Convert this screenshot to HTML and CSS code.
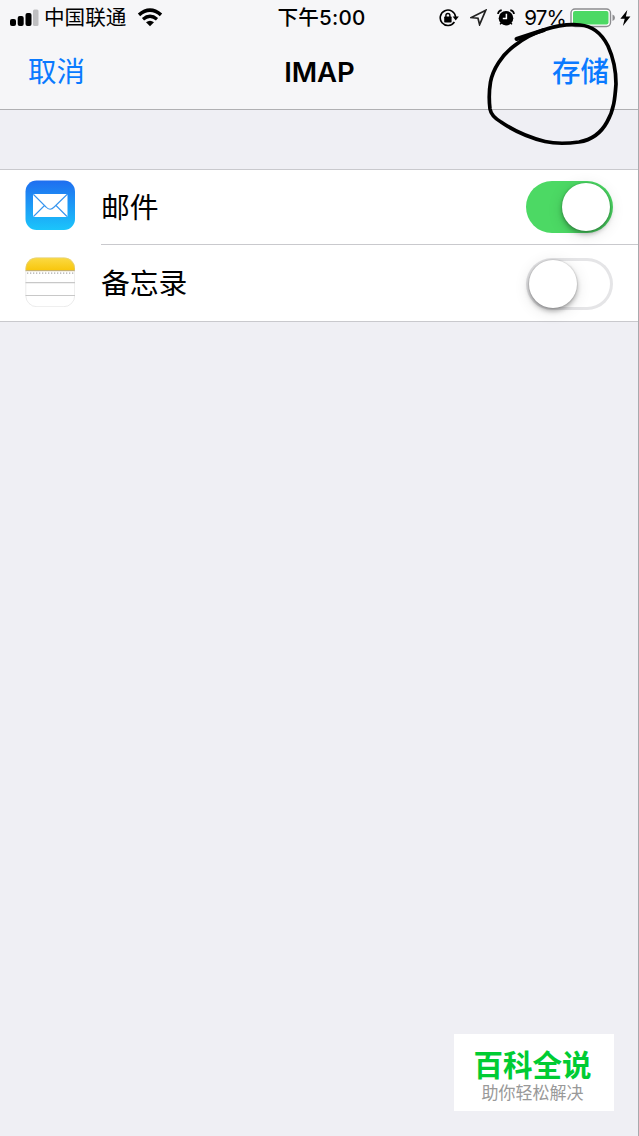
FILE: index.html
```html
<!DOCTYPE html>
<html lang="zh-CN">
    <head>
        <meta charset="utf-8">
        <title>IMAP</title>
        <link rel="stylesheet" href="styles.css">
    </head>
    <body>
        <div class="screen">
            <header>
                <div class="status">
                    <div class="left">
                        <svg class="signal" width="30" height="20" viewBox="0 0 30 20">
                            <rect x="0" y="11" width="6" height="7" rx="2"/>
                            <rect x="7.7" y="8" width="6" height="10" rx="2"/>
                            <rect x="15.5" y="5" width="6" height="13" rx="2"/>
                            <rect x="23" y="1.5" width="5.5" height="16.5" rx="1.5" fill="#bfbfc1"/>
                        </svg>
                        <span class="carrier">中国联通</span>
                        <svg class="wifi" width="26" height="19" viewBox="0 0 26 19">
                            <path d="M2 6.8Q13-2.6 24 6.8" fill="none" stroke="#000" stroke-width="3.6"/>
                            <path d="M6 11.2Q13 5.2 20 11.2" fill="none" stroke="#000" stroke-width="3.3"/>
                            <path d="M9 14.2Q13 11.2 17 14.2L13 18.2Z"/>
                        </svg>
                    </div>
                    <div class="time">下午5:00</div>
                    <div class="right">
                        <svg class="lock" width="20" height="18" viewBox="0 0 20 18">
                            <path d="M15.4 13A7.7 7.7 0 1 1 16.6 8" fill="none" stroke="#000" stroke-width="1.6"/>
                            <path d="M13.6 7.5H19.8L16.7 11.4Z"/>
                            <rect x="5.2" y="7.6" width="7.4" height="5.8" rx=".6"/>
                            <path d="M6.9 8.5V6.5a2 2 0 0 1 4 0V8.5" fill="none" stroke="#000" stroke-width="1.4"/>
                        </svg>
                        <svg class="arrow" width="17" height="17" viewBox="0 0 17 17">
                            <path d="M15.8 1.2L1.3 8.6L8 9.2L9.6 15.6Z" fill="none" stroke="#222" stroke-width="1.7"/>
                        </svg>
                        <svg class="alarm" width="18" height="18" viewBox="0 0 18 18">
                            <circle cx="9" cy="9.2" r="7.3"/>
                            <path d="M1 5Q1.4 1.8 4.7 1.2M17 5Q16.6 1.8 13.3 1.2" fill="none" stroke="#000" stroke-width="1.7"/>
                            <path d="M4 14L3.2 15.4M14 14L14.8 15.4" fill="none" stroke="#000" stroke-width="1.5"/>
                            <path d="M9.4 4.8V9.6H5.8" fill="none" stroke="#fff" stroke-width="1.5"/>
                        </svg>
                        <span class="percent">97%</span>
                        <svg class="battery" width="46" height="20" viewBox="0 0 46 20">
                            <rect x="1" y="1" width="39.5" height="17.5" rx="4" fill="#fff" stroke="#8c8c8f" stroke-width="1.4"/>
                            <rect x="3" y="3" width="35.5" height="13.5" rx="2" fill="#4cd964"/>
                            <path d="M42.5 6.5Q45 7.5 45 9.8T42.5 13Z" fill="#8c8c8f"/>
                        </svg>
                        <svg class="bolt" width="11" height="16" viewBox="0 0 11 16">
                            <path d="M7.3 0L.4 8.7H4.7L2.9 16L10.4 6.6H5.9Z"/>
                        </svg>
                    </div>
                </div>
                <div class="nav">
                    <a class="cancel">取消</a>
                    <h1>IMAP</h1>
                    <a class="save">存储</a>
                </div>
            </header>

            <ul class="list">
                <li>
                    <svg class="icon" width="50" height="50" viewBox="0 0 50 50">
                        <defs>
                            <linearGradient id="blue" x1="0" y1="0" x2="0" y2="1">
                                <stop offset="0" stop-color="#1f6ef0"/>
                                <stop offset="1" stop-color="#1bc5fb"/>
                            </linearGradient>
                        </defs>
                        <rect x=".5" y=".5" width="49.5" height="49.5" rx="11" fill="url(#blue)"/>
                        <rect x="8" y="14" width="34.5" height="23" rx="1.5" fill="#fff"/>
                        <path d="M8.5 14.5L21 27Q25 31.5 29.2 27L42 14.5M8.5 36.5L19.5 25.5M42 36.5L31 25.5" fill="none" stroke="#3795ef" stroke-width="1.1"/>
                    </svg>
                    <div class="cell">
                        <span>邮件</span>
                        <div class="switch on"><i></i></div>
                    </div>
                </li>
                <li>
                    <svg class="icon" width="50" height="50" viewBox="0 0 50 50">
                        <defs>
                            <clipPath id="round"><rect x=".5" y=".5" width="49.5" height="49.5" rx="11"/></clipPath>
                            <linearGradient id="yellow" x1="0" y1="0" x2="0" y2="1">
                                <stop offset="0" stop-color="#fbdb46"/>
                                <stop offset="1" stop-color="#f8c60c"/>
                            </linearGradient>
                        </defs>
                        <g clip-path="url(#round)">
                            <rect width="50" height="50" fill="#fff"/>
                            <rect width="50" height="13.5" fill="url(#yellow)"/>
                            <path d="M0 13.7H50" stroke="#b9a66a"/>
                            <path d="M2 16.2H50" stroke="#aaa" stroke-width="1.3" stroke-dasharray="1.3 1.7"/>
                            <path d="M0 25.6H50M0 38.5H50" stroke="#c8c8c8" stroke-width="1.2"/>
                        </g>
                        <rect x=".8" y=".8" width="48.9" height="48.9" rx="11" fill="none" stroke="#ccc" stroke-opacity=".5" stroke-width=".8"/>
                    </svg>
                    <div class="cell">
                        <span>备忘录</span>
                        <div class="switch"><i></i></div>
                    </div>
                </li>
            </ul>

            <div class="watermark">
                <strong>百科全说</strong>
                <small>助你轻松解决</small>
            </div>

            <!-- hand drawn ring round the save button -->
            <svg class="ring" width="140" height="130" viewBox="480 20 140 130">
                <path d="M545 29.5C557 25.5 568 24 580 25C594 26 602 34 608 46C613 57 616 69 616 84C615 98 614 110 607 122C601 133 591 140 579 142C568 143.5 556 144 545 141.5C531 138 514 131 501 122C495 118.5 491 115 490 109C489 101 489 91 490.5 82C493 69 502 55 514 46C524 38 534 33 545 29.5" stroke-width="3.7"/>
                <path d="M516.5 39L544 30" stroke-width="4"/>
            </svg>
        </div>
    </body>
</html>
```
FILE: styles.css
```css
*
{
    box-sizing: border-box;
}

body
{
    margin: 0;
    font-family: Inter, "Noto Sans CJK SC", sans-serif;
    color: #000;
}

svg
{
    display: block;
    flex-shrink: 0;
}

.screen
{
    position: relative;
    width: 639px;
    height: 1136px;
    background-color: #efeff4;
    border-right: 1px solid #a9a9ad;
    overflow: hidden;
}

header
{
    height: 110px;
    background-color: #f6f6f8;
    border-bottom: 1px solid #b0b0b3;
}

.status
{
    display: grid;
    grid-template-columns: 1fr auto 1fr;
    align-items: center;
    height: 35px;
    padding: 0 7px 0 10px;
    font-size: 20.6px;
    line-height: 35px;
}

.left, .right
{
    display: flex;
    align-items: center;
}

.right
{
    justify-content: flex-end;
}

.carrier
{
    margin: 0 11px 0 4px;
}

.time
{
    padding-left: 2px;
    font-weight: 500;
    letter-spacing: 0.2px;
}

.arrow
{
    margin-left: 11px;
}

.alarm
{
    margin: 0 9px 0 10px;
}

.percent
{
    letter-spacing: -0.8px;
}

.battery
{
    margin: 0 4px;
}

.nav
{
    display: grid;
    grid-template-columns: 1fr auto 1fr;
    align-items: center;
    height: 74px;
    padding: 0 29px 0 28px;
    font-size: 28.5px;
    line-height: 74px;
    color: #0a7aff;
}

.nav h1
{
    margin: 0;
    padding-left: 2px;
    font-size: 27.5px;
    font-weight: 600;
    color: #000;
}

.save
{
    text-align: right;
    font-weight: 500;
}

.list
{
    margin: 59px 0 0;
    padding: 0;
    list-style: none;
    background-color: #fff;
    border-top: 1px solid #c9c9cd;
    border-bottom: 1px solid #c9c9cd;
}

.list li
{
    display: flex;
    align-items: center;
    height: 75px;
    padding-left: 25px;
}

.list li:first-child
{
    height: 76px;
}

.icon
{
    margin-bottom: 3px;
}

.list li:first-child .icon
{
    margin-bottom: 6px;
}

.cell
{
    display: flex;
    align-items: center;
    justify-content: space-between;
    flex: 1;
    height: 75px;
    margin-left: 26px;
    padding-right: 25px;
    font-size: 28.8px;
}

.cell span
{
    padding-bottom: 4px;
}

.list li:first-child .cell
{
    border-bottom: 1px solid #c9c9cd;
    margin-bottom: 1px;
}

.switch
{
    width: 87px;
    height: 52px;
    padding: 2px 3px;
    border-radius: 26px;
    box-shadow: inset 0 0 0 3px #e5e5e7;
}

.switch i
{
    display: block;
    width: 48px;
    height: 48px;
    border-radius: 50%;
    background-color: #fff;
    box-shadow: 0 3px 5px rgba(0,0,0,.3), 0 3px 16px rgba(0,0,0,.12), 0 0 1px 1px rgba(0,0,0,.08);
}

.switch.on
{
    background-color: #4cd964;
    box-shadow: none;
}

.switch.on i
{
    margin-left: auto;
}

.watermark
{
    position: absolute;
    right: 24px;
    bottom: 25px;
    width: 160px;
    height: 77px;
    padding: 13px 3px 0 0;
    background-color: #fff;
    text-align: center;
}

.watermark strong, .watermark small
{
    display: block;
}

.watermark strong
{
    font-size: 29.5px;
    line-height: 36px;
    color: #0c3;
}

.watermark small
{
    font-size: 17px;
    line-height: 20px;
    color: #999;
}

.ring
{
    position: absolute;
    left: 480px;
    top: 20px;
    fill: none;
    stroke: #000;
    stroke-linecap: round;
}
```
